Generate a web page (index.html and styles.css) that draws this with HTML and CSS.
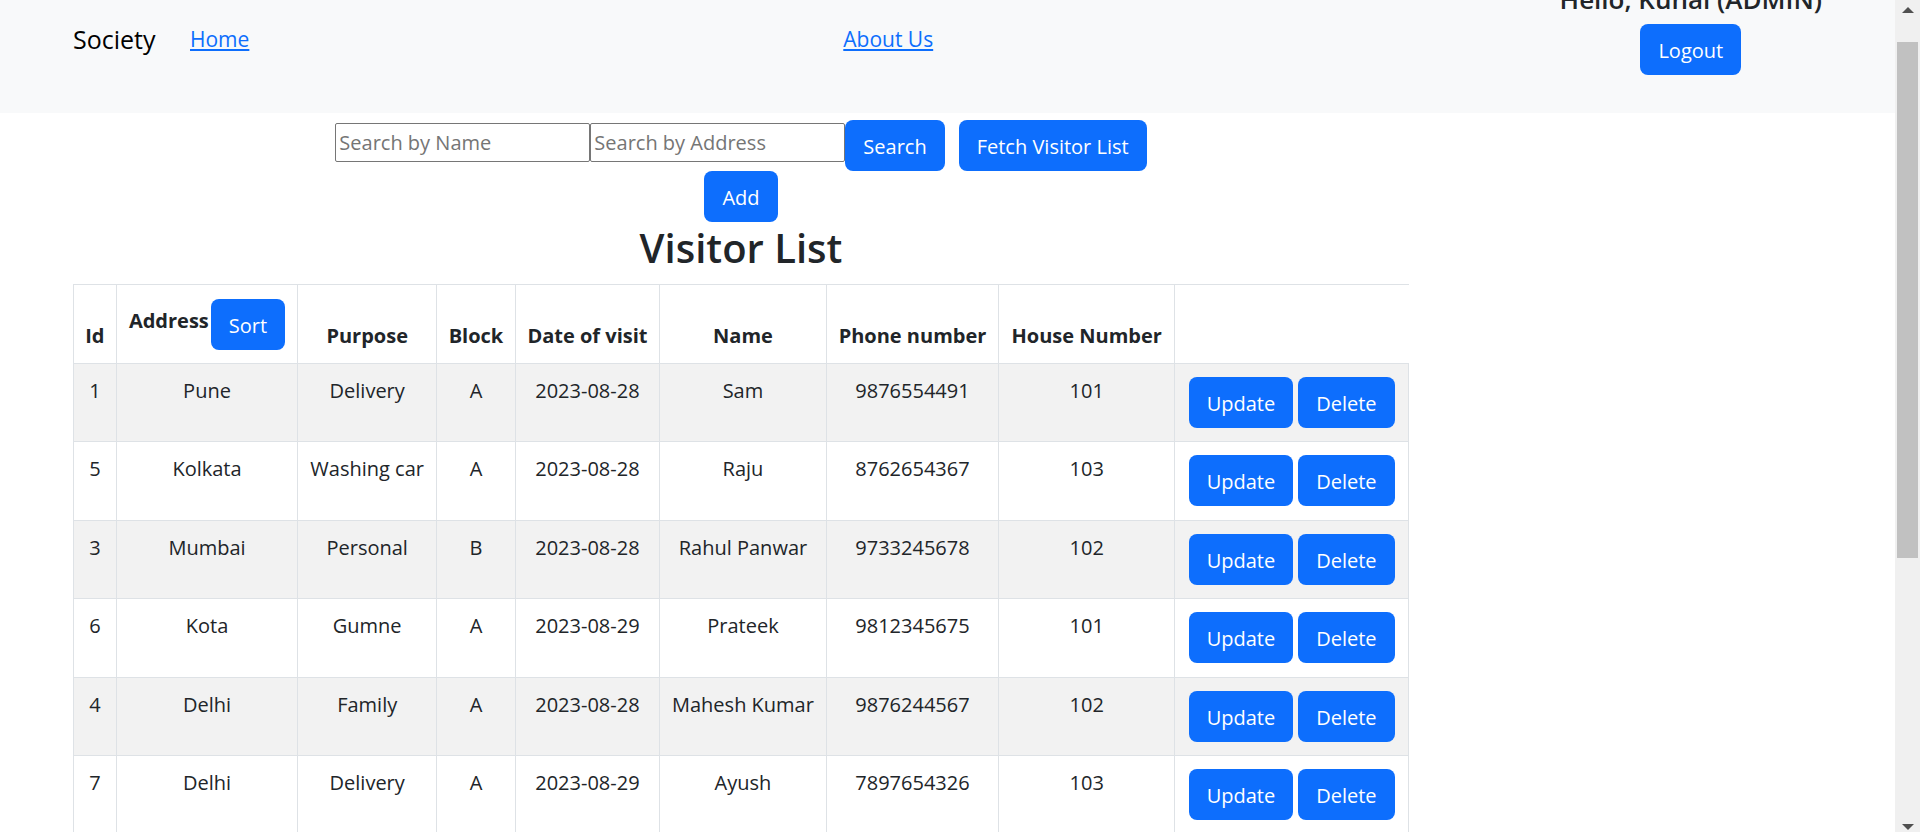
FILE: index.html
```html
<!DOCTYPE html>
<html lang="en">
<head>
<meta charset="utf-8">
<title>Visitor List</title>
<link rel="stylesheet" href="styles.css">
</head>
<body>
<div class="page">
  <nav class="navbar">
    <span class="brand">Society</span>
    <a class="nav-link" href="#home">Home</a>
    <a class="nav-link" href="#about">About Us</a>
    <div class="user">
      <h5 class="greeting">Hello, Kunal (ADMIN)</h5>
      <button class="btn" type="button">Logout</button>
    </div>
  </nav>
  <main class="layout">
    <section class="visitors">
      <form class="search">
        <input class="field" type="text" aria-label="Search by Name" placeholder="Search by Name">
        <input class="field" type="text" aria-label="Search by Address" placeholder="Search by Address">
        <button class="btn" type="button">Search</button>
        <button class="btn btn-fetch" type="button">Fetch Visitor List</button>
      </form>
      <button class="btn" type="button">Add</button>
      <h2 class="title">Visitor List</h2>
      <table class="table">
        <colgroup>
          <col class="c-id"><col class="c-address"><col class="c-purpose"><col class="c-block"><col class="c-date"><col class="c-name"><col class="c-phone"><col class="c-house"><col class="c-actions">
        </colgroup>
        <thead>
          <tr>
            <th>Id</th>
            <th><div class="sortable"><span class="sort-label">Address</span><button class="btn" type="button">Sort</button></div></th>
            <th>Purpose</th><th>Block</th><th>Date of visit</th><th>Name</th><th>Phone number</th><th>House Number</th>
            <td class="blank"></td>
          </tr>
        </thead>
        <tbody>
          <tr><td>1</td><td>Pune</td><td>Delivery</td><td>A</td><td>2023-08-28</td><td>Sam</td><td>9876554491</td><td>101</td><td><div class="actions"><button class="btn" type="button">Update</button><button class="btn" type="button">Delete</button></div></td></tr>
          <tr><td>5</td><td>Kolkata</td><td>Washing car</td><td>A</td><td>2023-08-28</td><td>Raju</td><td>8762654367</td><td>103</td><td><div class="actions"><button class="btn" type="button">Update</button><button class="btn" type="button">Delete</button></div></td></tr>
          <tr><td>3</td><td>Mumbai</td><td>Personal</td><td>B</td><td>2023-08-28</td><td>Rahul Panwar</td><td>9733245678</td><td>102</td><td><div class="actions"><button class="btn" type="button">Update</button><button class="btn" type="button">Delete</button></div></td></tr>
          <tr><td>6</td><td>Kota</td><td>Gumne</td><td>A</td><td>2023-08-29</td><td>Prateek</td><td>9812345675</td><td>101</td><td><div class="actions"><button class="btn" type="button">Update</button><button class="btn" type="button">Delete</button></div></td></tr>
          <tr><td>4</td><td>Delhi</td><td>Family</td><td>A</td><td>2023-08-28</td><td>Mahesh Kumar</td><td>9876244567</td><td>102</td><td><div class="actions"><button class="btn" type="button">Update</button><button class="btn" type="button">Delete</button></div></td></tr>
          <tr><td>7</td><td>Delhi</td><td>Delivery</td><td>A</td><td>2023-08-29</td><td>Ayush</td><td>7897654326</td><td>103</td><td><div class="actions"><button class="btn" type="button">Update</button><button class="btn" type="button">Delete</button></div></td></tr>
        </tbody>
      </table>
    </section>
  </main>
</div>
<div class="scrollbar" aria-hidden="true">
  <svg class="arrow" viewBox="0 0 12 6"><path d="M0 6 6 0l6 6z"/></svg>
  <div class="track"><div class="thumb"></div></div>
  <svg class="arrow" viewBox="0 0 12 6"><path d="M0 0h12L6 6z"/></svg>
</div>
</body>
</html>
```
FILE: styles.css
```css
* {
  box-sizing: border-box;
}

body {
  display: flex;
  height: 100vh;
  margin: 0;
  overflow: hidden;
  background: #fff;
  color: #212529;
  font: 20px/32px "Open Sans", "Noto Sans", sans-serif;
}

.page {
  flex: 1;
  min-width: 0;
  overflow: hidden;
}

.navbar {
  display: grid;
  grid-template-columns: 117px 653fr 716fr auto;
  align-items: start;
  margin-top: -17px;
  padding: 0 73px 38px;
  background: #f8f9fa;
}

.brand,
.nav-link {
  justify-self: start;
  margin-top: 40px;
}

.brand {
  color: #000;
  font-size: 25px;
}

.nav-link {
  color: #0d6efd;
  font-size: 21px;
  text-decoration: underline;
}

.user {
  text-align: center;
}

.greeting {
  margin: 0 0 9px;
  font-size: 26px;
  font-weight: 600;
  line-height: 32px;
}

.btn {
  padding: 11px 18px 8px;
  border: 0;
  border-radius: 8px;
  background: #0d6efd;
  color: #fff;
  font: 400 20px/32px "Open Sans", "Noto Sans", sans-serif;
  white-space: nowrap;
}

.layout {
  display: grid;
  grid-template-columns: 1336fr 413fr;
  padding: 7px 73px 0;
}

.visitors {
  display: flex;
  flex-direction: column;
  align-items: center;
}

.search {
  display: flex;
  align-items: flex-start;
}

.field {
  width: 255px;
  height: 39px;
  margin-top: 3px;
  padding: 1px 3px;
  border: 1px solid #767676;
  border-radius: 2px;
  font: 20px "Open Sans", "Noto Sans", sans-serif;
}

.field::placeholder {
  color: #757575;
}

.btn-fetch {
  margin-left: 14px;
}

.title {
  margin: 0 0 11px;
  font-size: 40px;
  font-weight: 600;
  line-height: 51px;
}

.table {
  width: 100%;
  table-layout: fixed;
  border-collapse: collapse;
  text-align: center;
}

.c-id { width: 3.2%; }
.c-address { width: 13.6%; }
.c-purpose { width: 10.4%; }
.c-block { width: 5.9%; }
.c-date { width: 10.8%; }
.c-name { width: 12.5%; }
.c-phone { width: 12.9%; }
.c-house { width: 13.2%; }
.c-actions { width: 17.5%; }

.table th,
.table td {
  padding: 11px 0;
  border: 1px solid #dee2e6;
  vertical-align: top;
  white-space: nowrap;
}

.table th {
  height: 79px;
  vertical-align: bottom;
  font-weight: 700;
}

.table .blank {
  border-right-color: transparent;
}

.table tbody tr:nth-child(odd) {
  background: #f2f2f2;
}

.table tbody tr:nth-child(even) {
  height: 79px;
}

.sortable,
.actions {
  display: flex;
  justify-content: center;
  padding: 2px 0;
}

.sortable {
  gap: 2px;
}

.sort-label {
  padding-top: 6px;
}

.actions {
  gap: 5px;
}

.scrollbar {
  display: flex;
  flex: none;
  flex-direction: column;
  align-items: center;
  width: 25px;
  padding: 7px 0 2px;
  background: #f0f0f0;
}

.arrow {
  width: 12px;
  height: 6px;
  fill: #505050;
}

.track {
  flex: 1;
  width: 21px;
  padding: 29px 0 0;
}

.thumb {
  height: 66%;
  background: #c1c1c1;
}
```
